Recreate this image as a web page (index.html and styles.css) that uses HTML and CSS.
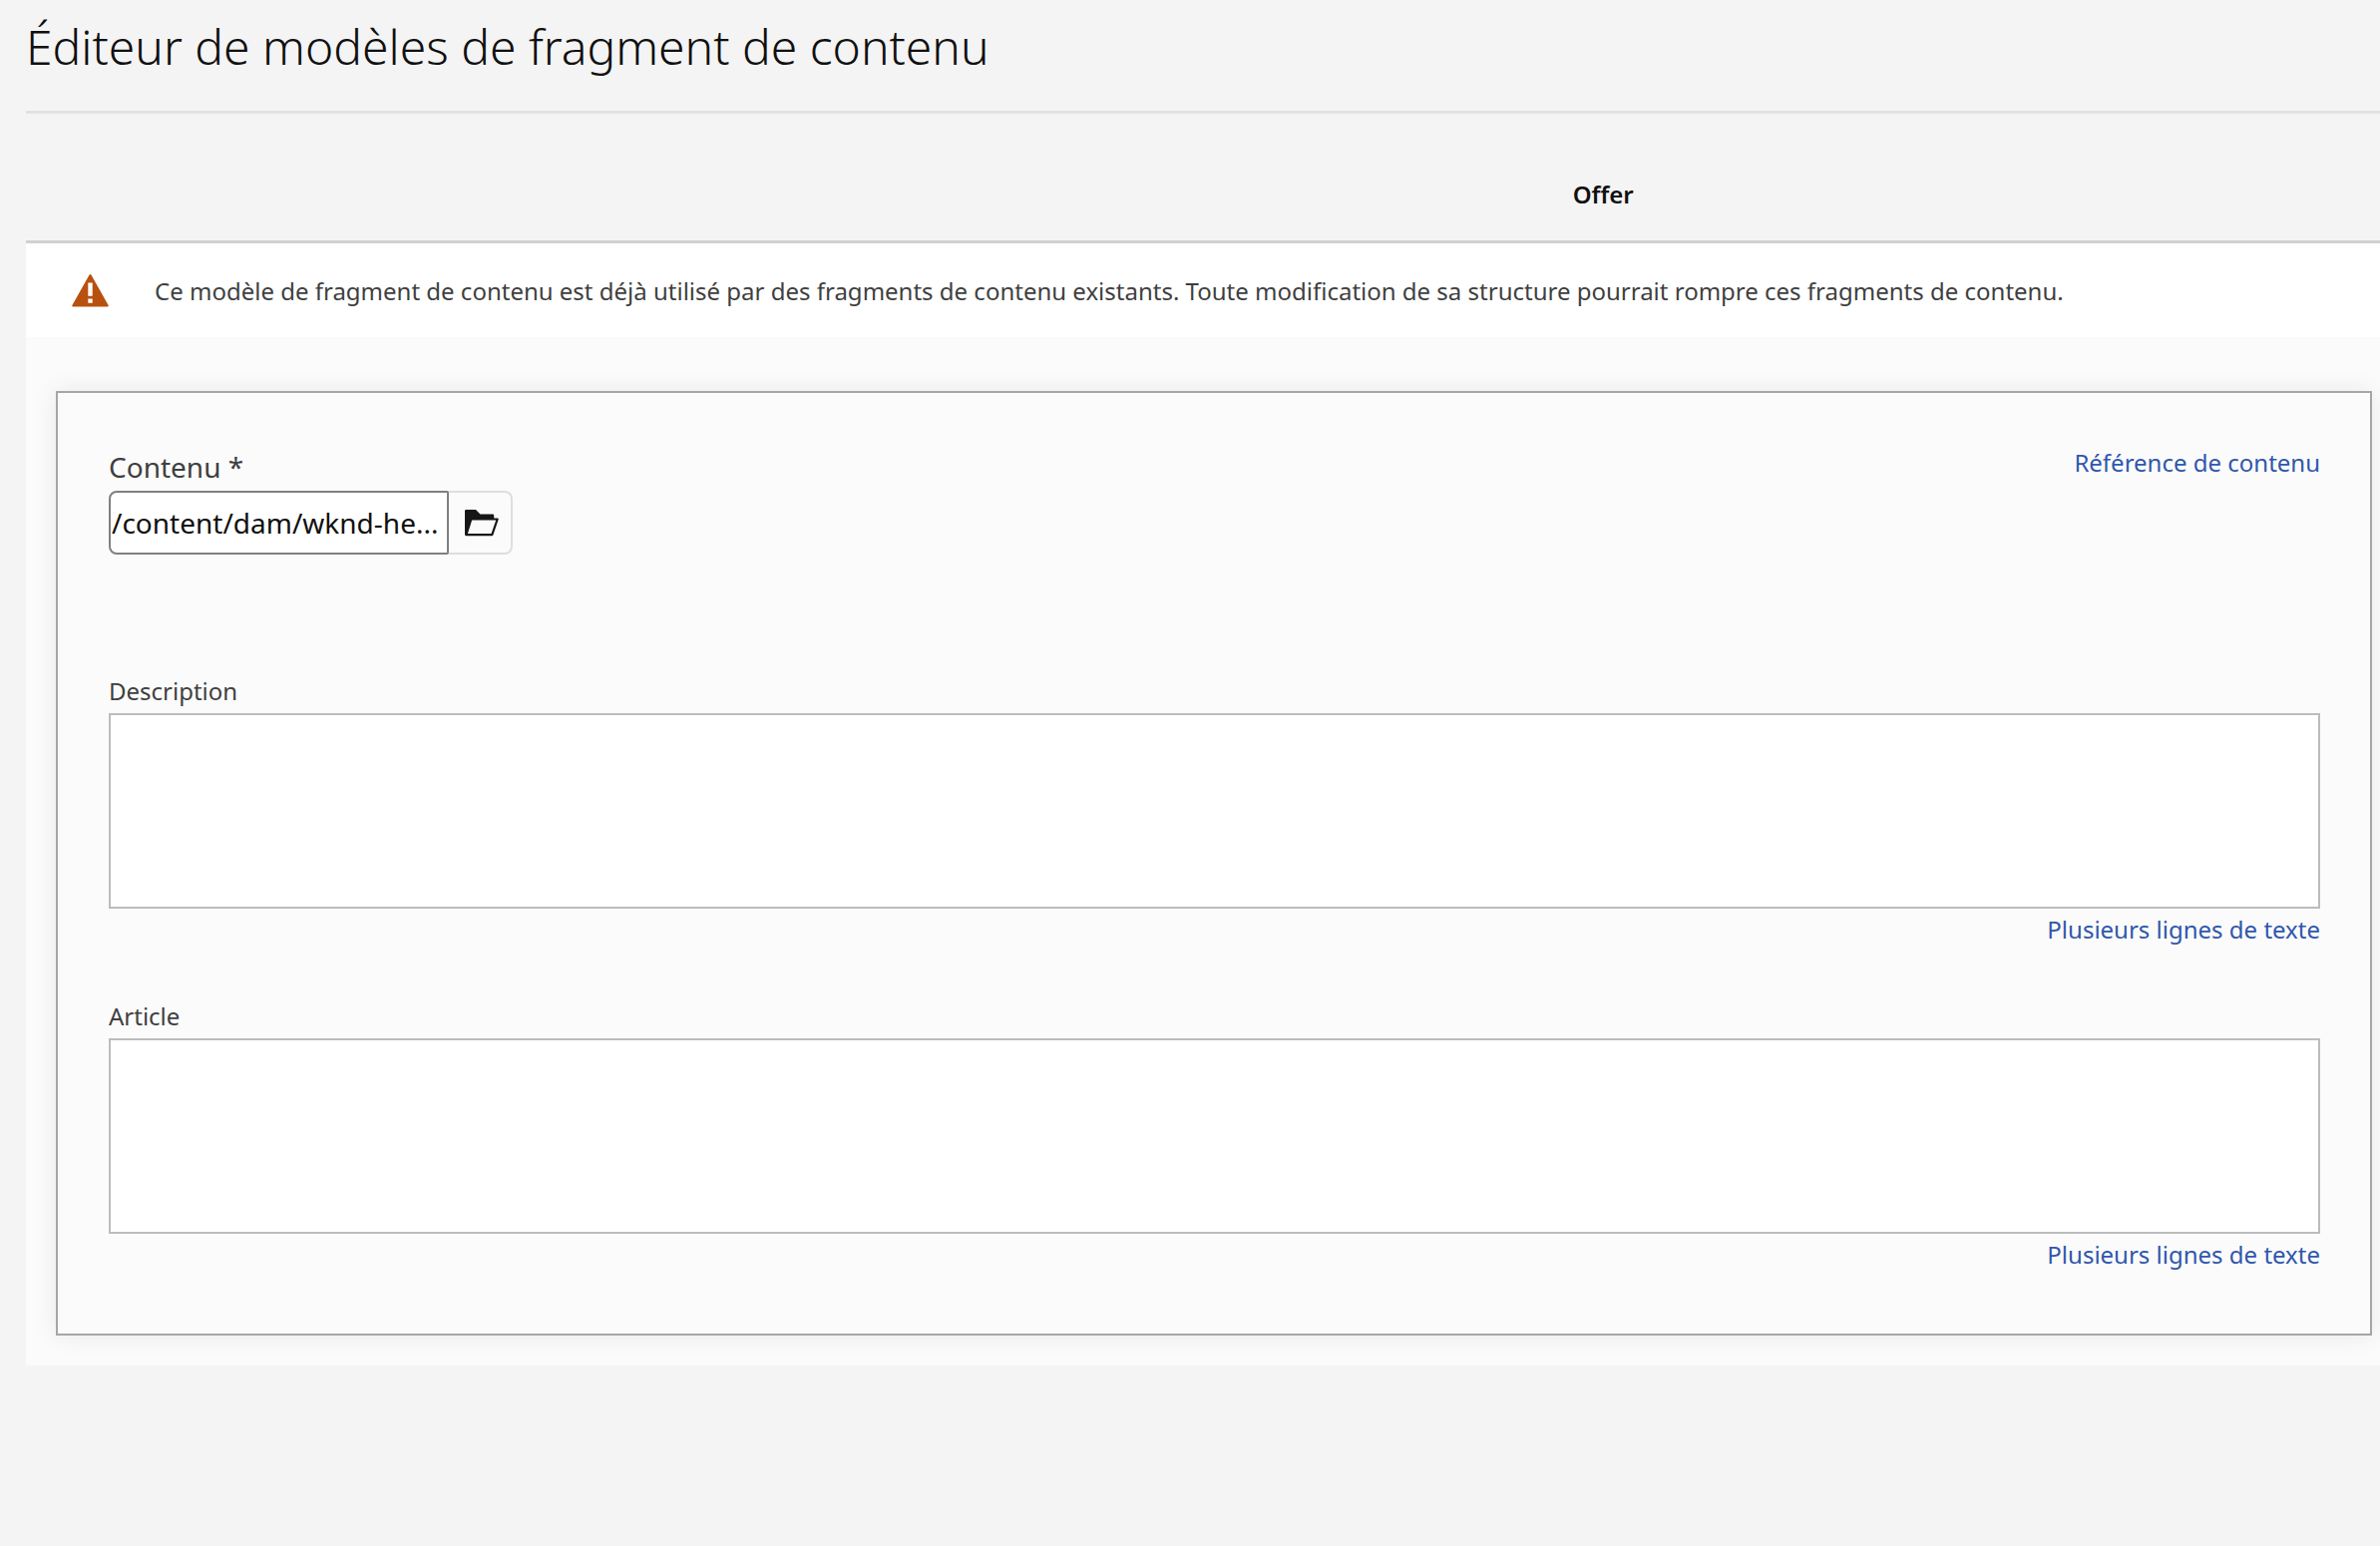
FILE: index.html
```html
<!DOCTYPE html>
<html lang="fr">
<head>
  <meta charset="utf-8">
  <meta name="viewport" content="width=device-width, initial-scale=1">
  <title>Éditeur de modèles de fragment de contenu</title>
  <link rel="stylesheet" href="styles.css">
</head>
<body>
  <main class="editor">
    <header class="editor-header">
      <h1 class="editor-title">Éditeur de modèles de fragment de contenu</h1>
    </header>
    <div class="model-bar">
      <h2 class="model-name">Offer</h2>
    </div>
    <div class="warning" role="alert">
      <svg class="warning-icon" viewBox="0 0 37 36" aria-hidden="true">
        <path d="M17.6 1.6a1 1 0 0 1 1.8 0L36.6 32a1 1 0 0 1-.9 1.4H1.3A1 1 0 0 1 .4 32Z" fill="#b8510f"/>
        <path d="M16.3 9.5h4.4v13.2h-4.4zM16.3 25.5h4.4v4.2h-4.4z" fill="#fff"/>
      </svg>
      <p class="warning-text">Ce modèle de fragment de contenu est déjà utilisé par des fragments de contenu existants. Toute modification de sa structure pourrait rompre ces fragments de contenu.</p>
    </div>
    <section class="panel">
      <form class="card">
        <div class="reference-row">
          <div class="reference-field">
            <label class="label-large" for="contenu">Contenu *</label>
            <div class="path-picker">
              <input class="path-input" id="contenu" type="text" value="/content/dam/wknd-he..." required>
              <button class="browse" type="button" aria-label="Parcourir">
                <svg class="browse-icon" viewBox="0 0 36 28" aria-hidden="true">
                  <path d="M1 2.2Q1 1 2.2 1H12l4.5 4.5H29q1.2 0 1.2 1.2V11H7L3.2 26.5H1Z" fill="#161616"/>
                  <path d="M7.3 10.5h26.4l-5.4 15.6H2.4Z" fill="#fbfbfb" stroke="#161616" stroke-width="2.2" stroke-linejoin="round"/>
                </svg>
              </button>
            </div>
          </div>
          <a class="type-link" href="#contenu">Référence de contenu</a>
        </div>
        <div class="text-field">
          <label class="label" for="description">Description</label>
          <textarea class="text-area" id="description"></textarea>
          <a class="type-link" href="#description">Plusieurs lignes de texte</a>
        </div>
        <div class="text-field">
          <label class="label" for="article">Article</label>
          <textarea class="text-area" id="article"></textarea>
          <a class="type-link" href="#article">Plusieurs lignes de texte</a>
        </div>
      </form>
    </section>
  </main>
</body>
</html>
```
FILE: styles.css
```css
* {
  box-sizing: border-box;
}

body {
  margin: 0;
  background: #f4f4f4;
  color: #3f3f3f;
  font: 24px/32px "Noto Sans", "Open Sans", sans-serif;
}

.editor {
  padding-left: 26px;
}

.editor-header {
  padding: 15px 0 32px;
  border-bottom: 3px solid #e2e2e2;
}

.editor-title {
  margin: 0;
  color: #101010;
  font-size: 48px;
  font-weight: 300;
  line-height: 64px;
}

.model-bar {
  padding: 65px 0 30px 34%;
  border-bottom: 3px solid #d1d1d1;
}

.model-name {
  margin: 0;
  color: #101010;
  font-size: 24px;
  font-weight: 600;
  line-height: 32px;
  text-align: center;
}

.warning {
  display: flex;
  align-items: center;
  gap: 46px;
  padding: 30px 46px 28px;
  background: #fff;
}

.warning-icon {
  flex: none;
  width: 37px;
  height: 36px;
}

.warning-text {
  margin: 0;
}

.panel {
  padding: 54px 8px 30px 30px;
  background: #fbfbfb;
}

.card {
  padding: 54px 50px 63px 51px;
  border: 2px solid #a6a6a6;
  background: #fbfbfb;
  box-shadow: 0 0 24px rgba(0, 0, 0, 0.08);
}

.reference-row {
  display: flex;
  align-items: flex-start;
  justify-content: space-between;
  margin-bottom: 121px;
}

.reference-field {
  display: flex;
  flex-direction: column;
  gap: 4px;
}

.label-large {
  font-size: 28px;
  line-height: 40px;
}

.path-picker {
  display: flex;
}

.path-input {
  width: 341px;
  height: 64px;
  padding: 0 1px;
  border: 2px solid #808080;
  border-radius: 8px 2px 2px 8px;
  background: #fff;
  color: #101010;
  font: inherit;
  font-size: 28px;
}

.browse {
  display: flex;
  align-items: center;
  justify-content: center;
  width: 64px;
  height: 64px;
  padding: 0 0 0 3px;
  border: 2px solid #dedede;
  border-left: 0;
  border-radius: 0 8px 8px 0;
  background: #fbfbfb;
}

.browse-icon {
  width: 36px;
  height: 28px;
}

.text-field {
  display: flex;
  flex-direction: column;
}

.text-field + .text-field {
  margin-top: 55px;
}

.label {
  margin-bottom: 6px;
}

.text-area {
  height: 196px;
  margin-bottom: 5px;
  padding: 8px;
  border: 2px solid #bcbcbc;
  background: #fff;
  font: inherit;
  resize: none;
}

.type-link {
  align-self: flex-end;
  color: #2f57ac;
  text-decoration: none;
}

.reference-row .type-link {
  align-self: flex-start;
}
```
